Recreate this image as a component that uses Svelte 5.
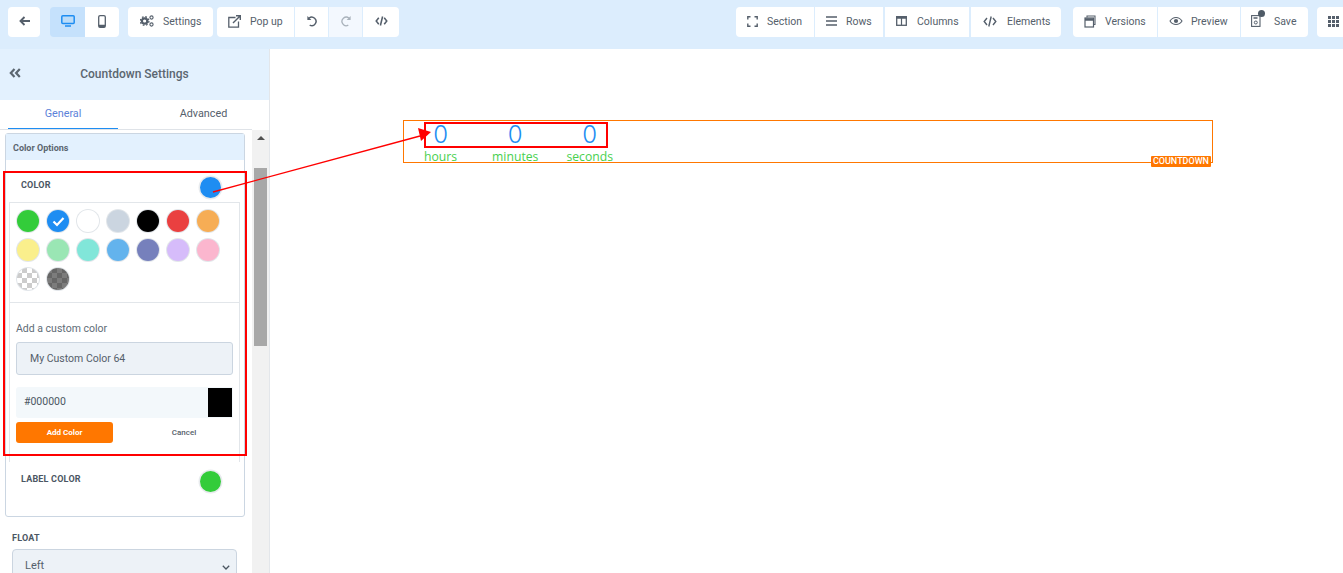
<script lang="ts">
	const swatches = [
		'#33cc3a', '#1e8df2', '#ffffff', '#cbd5e0', '#000000', '#ea4040', '#f6ad55',
		'#faef8c', '#9ae6b4', '#81e6d9', '#63b3ed', '#7680bc', '#d6bcfa', '#fbb6ce'
	];
	const units = ['hours', 'minutes', 'seconds'];
</script>

<div class="page">
	<header class="topbar">
		<div class="group">
			<button class="btn back" aria-label="Back">
				<svg width="11" height="10" viewBox="0 0 11 10"><path d="M5.500 1 1.500 5l4 4M2 5h9" fill="none" stroke="#555f6b" stroke-width="1.900"/></svg>
			</button>
		</div>
		<div class="group devices">
			<button class="btn device active" aria-label="Desktop">
				<svg width="14" height="12" viewBox="0 0 14 12"><rect x=".8" y=".8" width="12.400" height="7.800" rx="1" fill="#bcdcf8" stroke="#1e8df2" stroke-width="1.500"/><path d="M4 11h6" stroke="#1e8df2" stroke-width="1.700"/></svg>
			</button>
			<button class="btn device phone" aria-label="Mobile">
				<svg width="8" height="13" viewBox="0 0 8 13"><rect x=".7" y=".7" width="6.600" height="11.600" rx="1.400" fill="none" stroke="#555f6b" stroke-width="1.300"/><path d="M1 9.800h6v2.400H1z" fill="#555f6b"/></svg>
			</button>
		</div>
		<div class="group push">
			<button class="btn text settings">
				<svg width="14" height="12" viewBox="0 0 14 12"><circle cx="4.600" cy="6" r="2.700" fill="none" stroke="#555f6b" stroke-width="2.200"/><circle cx="4.600" cy="6" r="4.300" fill="none" stroke="#555f6b" stroke-width="1.300" stroke-dasharray="1.700 1.700"/><circle cx="11.500" cy="2.500" r="1.600" fill="none" stroke="#555f6b" stroke-width="1.100"/><circle cx="11.500" cy="9.500" r="1.600" fill="none" stroke="#555f6b" stroke-width="1.100"/></svg>
				Settings
			</button>
		</div>
		<div class="group joined">
			<button class="btn text popup">
				<svg width="13" height="13" viewBox="0 0 13 13"><path d="M7.500 2.500H.8v9.700h9.700V6.500" fill="none" stroke="#555f6b" stroke-width="1.300"/><path d="M5 8l6.800-6.800M8 .8h4.300V5" fill="none" stroke="#555f6b" stroke-width="1.400"/></svg>
				Pop up
			</button>
			<button class="btn undo" aria-label="Undo">
				<svg width="12" height="12" viewBox="0 0 13 13"><path d="M3.200 3.500A4.600 4.600 0 1 1 4 11" fill="none" stroke="#555f6b" stroke-width="1.600"/><path d="M1.500 1v4.300h4.300z" fill="#555f6b"/></svg>
			</button>
			<button class="btn redo" aria-label="Redo">
				<svg width="12" height="12" viewBox="0 0 13 13"><path d="M9.800 3.500A4.600 4.600 0 1 0 9 11" fill="none" stroke="#a9b2bb" stroke-width="1.400"/><path d="M11.500 1v4.300H7.200z" fill="#a9b2bb"/></svg>
			</button>
			<button class="btn code" aria-label="Code">
				<svg width="13" height="10" viewBox="0 0 14 11"><path d="M4 2 1.200 5.500 4 9M10 2l2.800 3.500L10 9M8.200.5l-2.400 10" fill="none" stroke="#555f6b" stroke-width="1.700"/></svg>
			</button>
		</div>

		<div class="spacer"></div>

		<div class="group joined">
			<button class="btn text section">
				<svg width="11" height="11" viewBox="0 0 11 11"><path d="M.8 3.500V.8h2.700M7.500.8h2.700v2.700M10.200 7.500v2.700H7.500M3.500 10.200H.8V7.500" fill="none" stroke="#555f6b" stroke-width="1.400"/></svg>
				Section
			</button>
			<button class="btn text rows">
				<svg width="11" height="10" viewBox="0 0 11 10"><path d="M0 1h11M0 5h11M0 9h11" stroke="#555f6b" stroke-width="1.300"/></svg>
				Rows
			</button>
			<button class="btn text columns">
				<svg width="11" height="10" viewBox="0 0 11 10"><rect x=".7" y=".7" width="9.600" height="8.600" fill="none" stroke="#555f6b" stroke-width="1.300"/><path d="M0 1.500h11" stroke="#555f6b" stroke-width="2.400"/><path d="M5.500 1v8" stroke="#555f6b" stroke-width="1.200"/></svg>
				Columns
			</button>
			<button class="btn text elements">
				<svg width="14" height="11" viewBox="0 0 14 11"><path d="M4 2 1.200 5.500 4 9M10 2l2.800 3.500L10 9M8.200.5l-2.400 10" fill="none" stroke="#555f6b" stroke-width="1.400"/></svg>
				Elements
			</button>
		</div>
		<div class="group joined second-set">
			<button class="btn text versions">
				<svg width="12" height="13" viewBox="0 0 12 13"><path d="M3 2.500V1h8v8.500H9.500" fill="none" stroke="#555f6b" stroke-width="1.100"/><rect x="1" y="3" width="8.500" height="9" fill="none" stroke="#555f6b" stroke-width="1.200"/><path d="M1 4.500h8.500" stroke="#555f6b" stroke-width="2.400"/></svg>
				Versions
			</button>
			<button class="btn text preview">
				<svg width="14" height="10" viewBox="0 0 14 10"><path d="M1 5c3-4.700 9-4.700 12 0-3 4.700-9 4.700-12 0z" fill="none" stroke="#555f6b" stroke-width="1.100"/><circle cx="7" cy="5" r="2.100" fill="#555f6b"/></svg>
				Preview
			</button>
			<button class="btn text save">
				<span class="save-icon">
					<svg width="11" height="12" viewBox="0 0 11 12"><rect x=".6" y=".6" width="8.400" height="10.800" fill="none" stroke="#555f6b" stroke-width="1.100"/><path d="M2.500 3h4" stroke="#555f6b" stroke-width="1.300"/><circle cx="4.800" cy="7.500" r="1.500" fill="none" stroke="#555f6b"/></svg>
					<i class="dot"></i>
				</span>
				Save
			</button>
		</div>
		<div class="group apps-group">
			<button class="btn apps" aria-label="Apps">
				<svg width="11" height="11" viewBox="0 0 11 11" fill="#555f6b"><path d="M0 0h3v3H0zM4 0h3v3H4zM8 0h3v3H8zM0 4h3v3H0zM4 4h3v3H4zM8 4h3v3H8zM0 8h3v3H0zM4 8h3v3H4zM8 8h3v3H8z"/></svg>
			</button>
		</div>
	</header>

	<div class="body">
		<aside class="sidebar">
			<div class="side-head">
				<svg class="collapse" width="12" height="10" viewBox="0 0 12 10"><path d="M5.500 1 1.800 5l3.700 4M10.800 1 7.100 5l3.700 4" fill="none" stroke="#5b6670" stroke-width="2.200"/></svg>
				<span>Countdown Settings</span>
			</div>
			<div class="tabs">
				<div class="tab active">General</div>
				<div class="tab">Advanced</div>
			</div>
			<div class="side-scroll">
				<div class="side-content">
					<section class="panel">
						<h4>Color Options</h4>
						<div class="color-row first">
							<span class="caps">Color</span>
							<i class="picked blue"></i>
						</div>
						<div class="picker">
							<div class="swatches">
								{#each swatches as c, i}
									<span class="swatch" style="background: {c}">
										{#if i === 1}
											<svg width="13" height="11" viewBox="0 0 13 11"><path d="M1.500 5.500 5 9l6.500-7" fill="none" stroke="#fff" stroke-width="2.200"/></svg>
										{/if}
									</span>
								{/each}
								<span class="swatch checker light"></span>
								<span class="swatch checker dark"></span>
							</div>
							<div class="custom">
								<div class="custom-title">Add a custom color</div>
								<div class="name-input">My Custom Color 64</div>
								<div class="hex-row">
									<span>#000000</span>
									<i class="hex-preview"></i>
								</div>
								<div class="actions">
									<button class="add">Add Color</button>
									<button class="cancel">Cancel</button>
								</div>
							</div>
						</div>
						<div class="color-row second">
							<span class="caps">Label Color</span>
							<i class="picked green"></i>
						</div>
					</section>
					<div class="float-field">
						<div class="caps">Float</div>
						<div class="select">
							<span>Left</span>
							<svg width="8" height="5" viewBox="0 0 8 5"><path d="M.8.8 4 4 7.200.8" fill="none" stroke="#4a5560" stroke-width="1.300"/></svg>
						</div>
					</div>
				</div>
				<div class="scrollbar">
					<i class="up"></i>
					<i class="thumb"></i>
				</div>
			</div>
		</aside>

		<main class="canvas">
			<div class="countdown">
				{#each units as unit}
					<div class="unit">
						<div class="digit">0</div>
						<div class="unit-label">{unit}</div>
					</div>
				{/each}
				<span class="tag">COUNTDOWN</span>
			</div>
		</main>
	</div>

	<!-- tutorial annotations drawn on top of the screenshot -->
	<div class="mark mark-color"></div>
	<div class="mark mark-digits"></div>
	<svg class="arrow" width="1343" height="573" viewBox="0 0 1343 573">
		<path d="M213 192 420 136" stroke="#f00" stroke-width="1.300"/>
		<path d="M431 132 418 128 421 141z" fill="#f00"/>
	</svg>
</div>

<style>
	:global(body) {
		margin: 0;
		font-family: Roboto, 'Liberation Sans', sans-serif;
		background: #fff;
		overflow: hidden;
	}

	.page {
		position: relative;
		width: 1343px;
		height: 573px;
		overflow: hidden;
		color: #55606b;
	}

	.topbar {
		height: 49px;
		box-sizing: border-box;
		background: #dcedfd;
		display: flex;
		padding: 7px 0 12px 8px;
		gap: 4px;
		overflow: hidden;
	}

	.group {
		display: flex;
		gap: 1px;
		border-radius: 4px;
		overflow: hidden;
		flex: none;
	}

	.push { margin-left: 5px; }
	.spacer { flex: 1; }
	.second-set { margin-left: 8px; }
	.apps-group { margin: 0 -14px 0 5px; }

	.btn {
		height: 30px;
		border: 0;
		padding: 0 0 2px;
		background: #fff;
		color: #55606b;
		font: 400 10.500px Roboto, sans-serif;
		display: flex;
		align-items: center;
		justify-content: center;
		white-space: nowrap;
	}

	.btn.text {
		justify-content: flex-start;
		padding-left: 11px;
		gap: 9px;
	}

	.back { width: 32px; }
	.devices { margin-left: 6px; gap: 0; }
	.device { width: 35px; }
	.device.phone { width: 34px; }
	.device.active { background: #c5e1fc; }
	.btn.settings { width: 85px; padding-left: 12px; }
	.popup { width: 77px; }
	.undo { width: 33px; }
	.redo { width: 33px; background: #f3f8fe; }
	.code { width: 36px; }
	.section { width: 78px; }
	.rows { width: 68px; }
	.btn.columns { width: 84px; margin-left: 1px; gap: 10px; }
	.btn.elements { width: 90px; margin-left: 1px; padding-left: 12px; gap: 10px; }
	.versions { width: 84px; }
	.btn.preview { width: 82px; gap: 8px; }
	.btn.save { width: 67px; padding-left: 10px; gap: 12px; }
	.btn.apps { width: 40px; justify-content: flex-start; padding-left: 11px; }

	.save-icon {
		position: relative;
		display: flex;
	}

	.dot {
		position: absolute;
		top: -5px;
		right: -3px;
		width: 7px;
		height: 7px;
		border-radius: 50%;
		background: #4f5b67;
	}

	.body {
		display: flex;
		height: 524px;
	}

	.sidebar {
		width: 270px;
		box-sizing: border-box;
		border-right: 1px solid #e3e6ea;
		flex: none;
		display: flex;
		flex-direction: column;
		overflow: hidden;
	}

	.side-head {
		height: 51px;
		box-sizing: border-box;
		padding-bottom: 2px;
		background: #e3f1fe;
		display: flex;
		align-items: center;
		justify-content: center;
		font-size: 12px;
		font-weight: 500;
		color: #5b6670;
		position: relative;
		flex: none;
	}

	.collapse {
		position: absolute;
		left: 9px;
		top: 19px;
	}

	.tabs {
		display: flex;
		height: 29px;
		border-bottom: 1px solid #dfe3e8;
		padding-left: 8px;
		flex: none;
		width: 244px;
	}

	.tab {
		width: 110px;
		text-align: center;
		font-size: 10.800px;
		line-height: 27px;
		height: 29px;
		box-sizing: border-box;
	}

	.tab + .tab {
		width: 134px;
		padding-left: 37px;
	}

	.tab.active {
		color: #5c82d9;
		border-bottom: 1px solid #1e8df2;
	}

	.side-scroll {
		display: flex;
		flex: 1;
		min-height: 0;
	}

	.side-content {
		width: 252px;
		flex: none;
		padding: 3px 0 0 5px;
		box-sizing: border-box;
	}

	.scrollbar {
		flex: 1;
		background: #f1f1f1;
		display: flex;
		flex-direction: column;
		align-items: center;
	}

	.up {
		width: 0;
		height: 0;
		margin-top: 6px;
		border: 4px solid transparent;
		border-top: 0;
		border-bottom: 4px solid #505050;
	}

	.thumb {
		margin-top: 28px;
		width: 13px;
		height: 178px;
		background: #a8a8a8;
	}

	.panel {
		width: 240px;
		height: 384px;
		box-sizing: border-box;
		border: 1px solid #cbd6e2;
		border-radius: 3px;
	}

	h4 {
		margin: 0;
		height: 26px;
		line-height: 29px;
		padding-left: 7px;
		background: #e3f1fe;
		font-size: 9px;
		font-weight: 700;
		color: #5b6670;
	}

	.caps {
		font-size: 9px;
		font-weight: 700;
		letter-spacing: 0.2px;
		text-transform: uppercase;
		color: #4b5663;
	}

	.color-row {
		display: flex;
		justify-content: space-between;
		padding: 0 23px 0 15px;
	}

	.color-row.first {
		height: 42px;
		padding-top: 20px;
		box-sizing: border-box;
	}

	.color-row.second {
		padding-top: 12px;
	}

	.picked {
		width: 21px;
		height: 21px;
		border-radius: 50%;
		margin-top: -3px;
		box-shadow: 0 0 0 1.500px #e8ebee;
	}

	.blue { background: #1e8df2; }
	.green { background: #33cc3a; }

	.picker {
		margin: 0 3px;
		width: 231px;
		height: 260px;
		box-sizing: border-box;
		border: 1px solid #e2e6ea;
		border-bottom: 0;
	}

	.swatches {
		height: 100px;
		box-sizing: border-box;
		padding: 7px 0 0 7px;
		display: grid;
		grid-template-columns: repeat(7, 22px);
		grid-auto-rows: 22px;
		gap: 7px 8px;
		border-bottom: 1px solid #e2e6ea;
	}

	.swatch {
		width: 22px;
		height: 22px;
		border-radius: 50%;
		box-shadow: 0 0 0 1px #e2e6ea;
		display: flex;
		align-items: center;
		justify-content: center;
	}

	.checker {
		background-size: 10px 10px;
	}

	.checker.light {
		background-color: #fff;
		background-image: conic-gradient(#ccc 25%, #fff 0 50%, #ccc 0 75%, #fff 0);
	}

	.checker.dark {
		background-color: #777;
		background-image: conic-gradient(#666 25%, #7c7c7c 0 50%, #666 0 75%, #7c7c7c 0);
	}

	.custom {
		padding: 19px 6px 0;
	}

	.custom-title {
		font-size: 10.500px;
		line-height: 14px;
		color: #606b76;
	}

	.name-input {
		margin-top: 6px;
		height: 33px;
		line-height: 31px;
		box-sizing: border-box;
		background: #edf2f7;
		border: 1px solid #cbd5e0;
		border-radius: 3px;
		padding-left: 13px;
		font-size: 10.500px;
	}

	.hex-row {
		margin-top: 12px;
		height: 31px;
		background: #f3f8fb;
		display: flex;
		justify-content: space-between;
		padding: 1px;
		box-sizing: border-box;
		border-radius: 3px 0 0 3px;
		font-size: 10.500px;
		line-height: 27px;
		color: #4b5663;
	}

	.hex-row span {
		padding-left: 7px;
	}

	.hex-preview {
		width: 24px;
		background: #000;
	}

	.actions {
		margin-top: 4px;
		display: flex;
	}

	.actions button {
		flex: none;
		border: 0;
		height: 21px;
		padding: 0;
		font: 700 8px Roboto, sans-serif;
		background: none;
		color: #55606b;
	}

	.actions .add {
		width: 97px;
		background: #ff7700;
		color: #fff;
		border-radius: 3px;
	}

	.actions .cancel {
		width: 120px;
		margin-left: 11px;
		font-weight: 500;
	}

	.float-field {
		margin: 16px 0 0 7px;
		width: 225px;
	}

	.float-field .caps {
		line-height: 11px;
	}

	.select {
		margin-top: 5px;
		height: 34px;
		box-sizing: border-box;
		background: #edf2f7;
		border: 1px solid #cbd5e0;
		border-radius: 4px;
		padding: 9px 6px 0 12px;
		font-size: 11px;
		display: flex;
		justify-content: space-between;
		align-items: flex-start;
	}

	.select svg {
		margin-top: 6px;
	}

	.canvas {
		flex: 1;
		position: relative;
		background: #fff;
		padding: 71px 0 0 133px;
	}

	.countdown {
		position: relative;
		width: 810px;
		height: 43px;
		box-sizing: border-box;
		border: 1px solid #ff7700;
		padding-left: 20px;
		display: flex;
		gap: 28px;
	}

	.unit {
		display: flex;
		flex-direction: column;
		align-items: center;
	}

	.unit:first-child {
		margin-right: 7px;
	}

	.digit {
		font-family: Inter, sans-serif;
		font-weight: 300;
		font-size: 24px;
		line-height: 28px;
		color: #1e8df2;
	}

	.unit-label {
		font-family: 'Open Sans', sans-serif;
		font-size: 12.200px;
		line-height: 15px;
		color: #33cc3a;
		opacity: 0.9;
	}

	.tag {
		position: absolute;
		right: 1px;
		bottom: -5px;
		background: #ff7700;
		color: #fff;
		font-size: 9px;
		font-weight: 500;
		line-height: 11px;
		padding: 0 2px;
		border-radius: 1px;
	}

	.mark {
		position: absolute;
		border: 2px solid #f00;
		box-sizing: border-box;
		pointer-events: none;
	}

	.mark-color {
		left: 3px;
		top: 171px;
		width: 244px;
		height: 285px;
	}

	.mark-digits {
		left: 424px;
		top: 122px;
		width: 184px;
		height: 26px;
	}

	.arrow {
		position: absolute;
		left: 0;
		top: 0;
		pointer-events: none;
	}
</style>
